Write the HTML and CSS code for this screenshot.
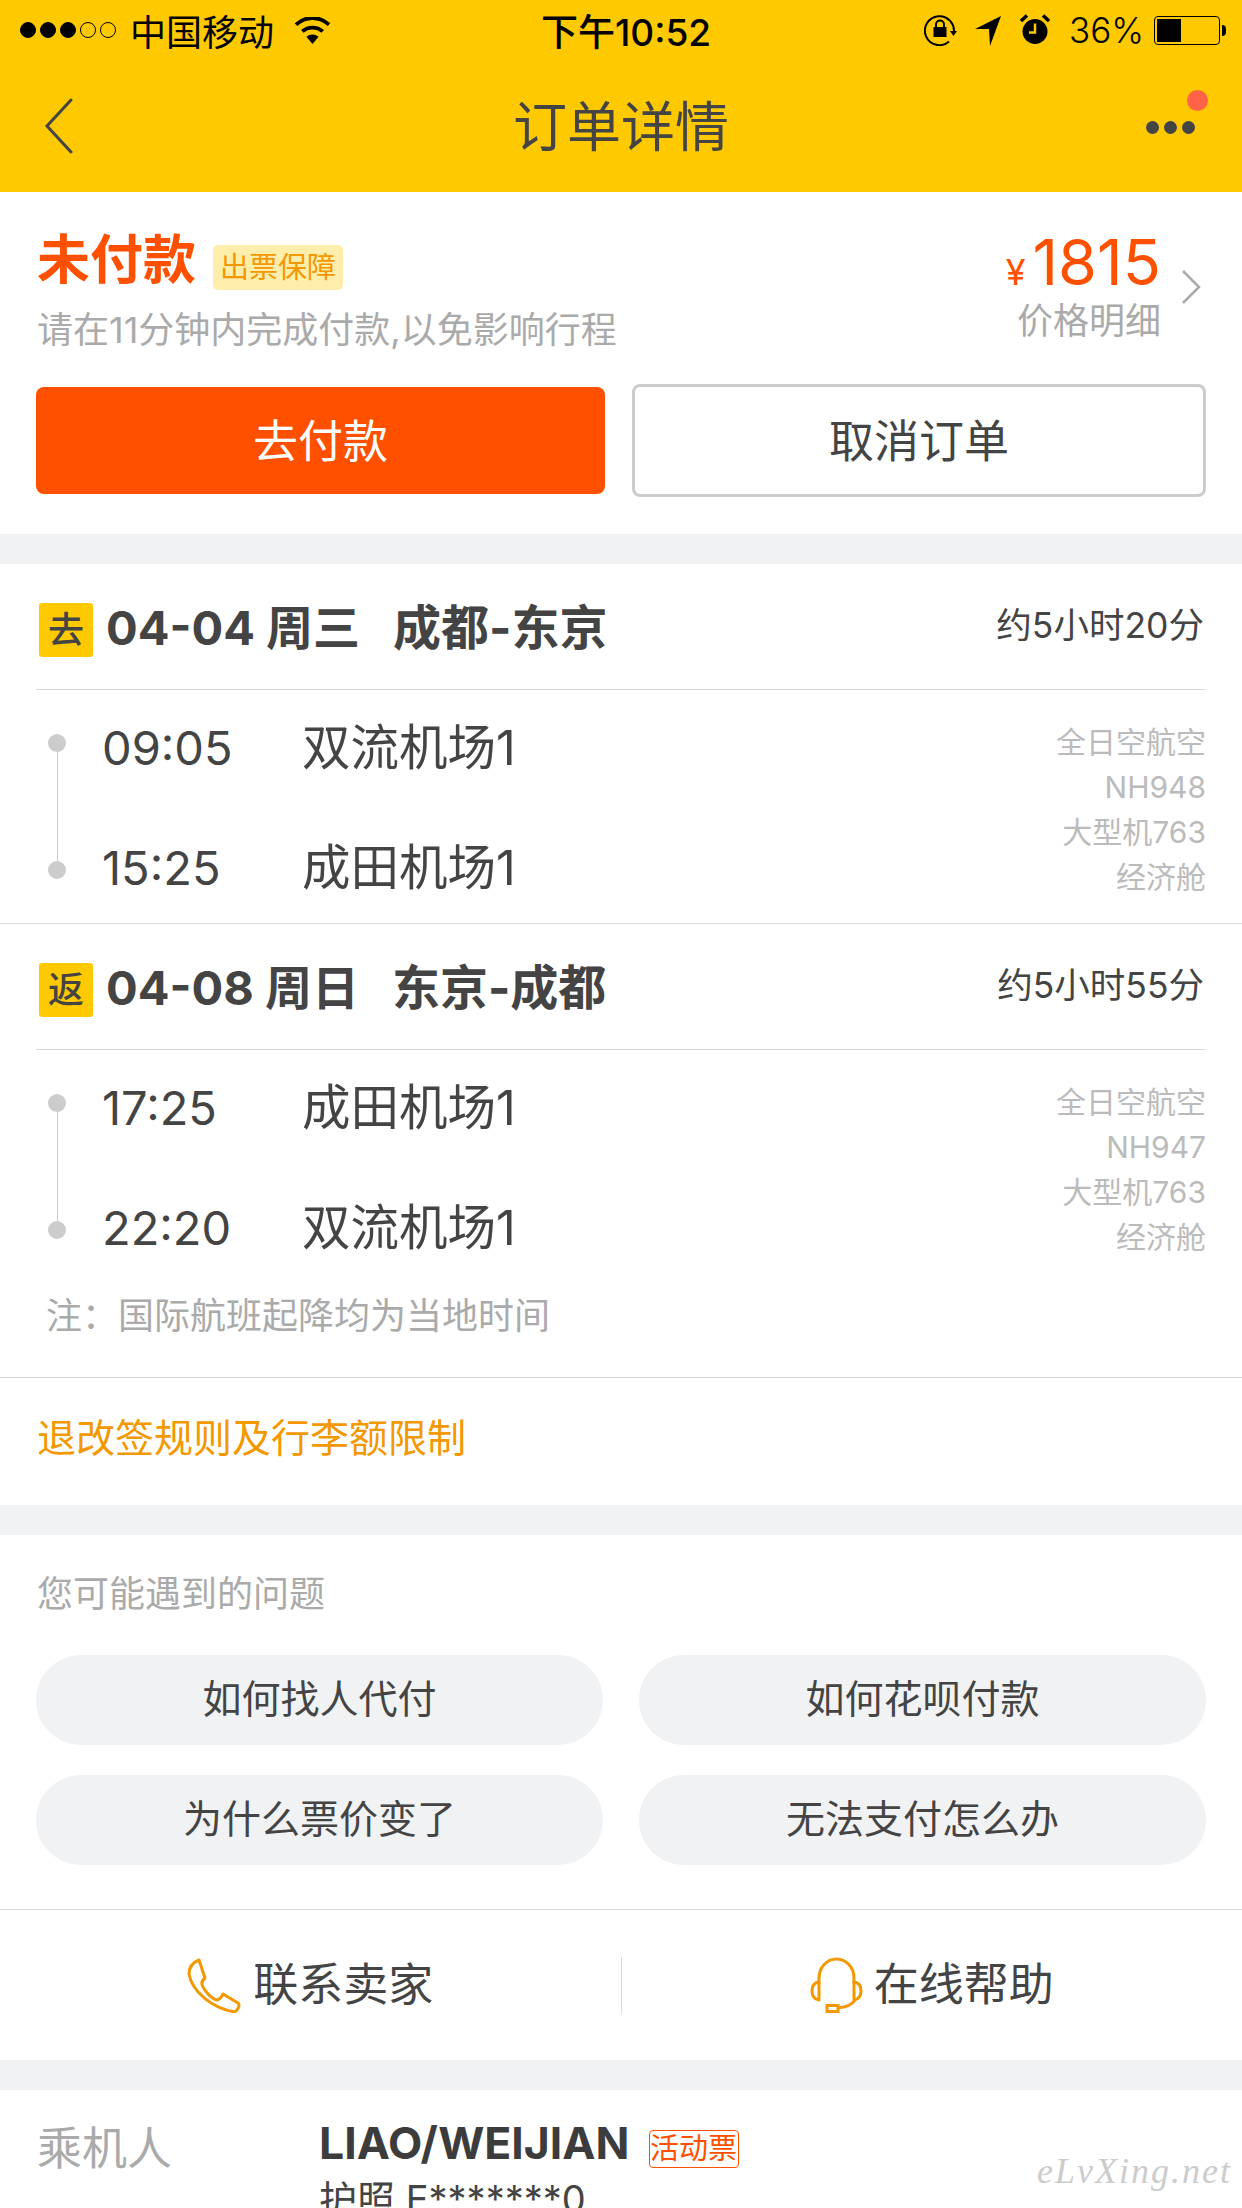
FILE: index.html
```html
<!DOCTYPE html>
<html lang="zh-CN">
<head>
    <meta charset="UTF-8">
    <meta name="viewport" content="width=device-width, initial-scale=1.0">
    <title>订单详情</title>
    <link rel="stylesheet" href="styles.css">
</head>
<body>

    <div class="top-bar">
        <div class="status-bar">
            <div class="status-left">
                <span class="signal"><i class="on"></i><i class="on"></i><i class="on"></i><i></i><i></i></span>
                <span class="carrier">中国移动</span>
                <svg class="wifi" width="37" height="27" viewBox="0 0 37 27">
                    <path d="M18.5 27 L12.4 19.8 A9.5 9.5 0 0 1 24.6 19.8 Z" fill="#000"/>
                    <path d="M8.3 14.4 A15.5 15.5 0 0 1 28.7 14.4" fill="none" stroke="#000" stroke-width="3.8"/>
                    <path d="M2 7.6 A24 24 0 0 1 35 7.6" fill="none" stroke="#000" stroke-width="3.8"/>
                </svg>
            </div>
            <div class="status-time">下午10:52</div>
            <div class="status-right">
                <svg class="rotate-lock" width="33" height="33" viewBox="0 0 33 33">
                    <path d="M29.5 21 A14.5 14.5 0 1 0 25 28.5" fill="none" stroke="#000" stroke-width="2"/>
                    <path d="M26 18 L33 18 L29.5 23 Z" fill="#000"/>
                    <rect x="9.5" y="14" width="13" height="10" fill="#000"/>
                    <path d="M12 14 V11.5 A4 4 0 0 1 20 11.5 V14" fill="none" stroke="#000" stroke-width="2"/>
                </svg>
                <svg class="arrow" width="26" height="32" viewBox="0 0 26 32">
                    <path d="M26 2 L15 32 L14 15 L0 15 Z" fill="#000"/>
                </svg>
                <svg class="alarm" width="30" height="32" viewBox="0 0 30 32">
                    <circle cx="15" cy="17.5" r="12.5" fill="#000"/>
                    <path d="M1 7 L7 1.5 M29 7 L23 1.5" stroke="#000" stroke-width="3.5"/>
                    <path d="M15 9.5 V18.5 H9" fill="none" stroke="#ffc900" stroke-width="2.5"/>
                </svg>
                <span class="battery-pct">36%</span>
                <span class="battery"><span class="battery-fill"></span></span>
                <span class="battery-nub"></span>
            </div>
        </div>
        <div class="nav-bar">
            <svg class="back" width="30" height="56" viewBox="0 0 30 56">
                <path d="M27 2 L3 28 L27 54" fill="none" stroke="#444" stroke-width="3" stroke-linecap="round" stroke-linejoin="miter"/>
            </svg>
            <h1 class="page-title">订单详情</h1>
            <div class="more">
                <i></i><i></i><i></i>
                <span class="red-dot"></span>
            </div>
        </div>
    </div>

    <div class="section order-top">
        <div class="summary">
            <div>
                <div class="status-row">
                    <span class="status-text">未付款</span>
                    <span class="guarantee">出票保障</span>
                </div>
                <div class="status-tip">请在11分钟内完成付款,以免影响行程</div>
            </div>
            <div class="price-box">
                <div class="price-col">
                    <div class="price"><span class="yen">¥</span>1815</div>
                    <div class="price-detail">价格明细</div>
                </div>
                <svg class="price-arrow" width="26" height="38" viewBox="0 0 26 38">
                    <path d="M3 3 L19 19 L3 35" fill="none" stroke="#aaa" stroke-width="2.5"/>
                </svg>
            </div>
        </div>
        <div class="actions">
            <div class="btn btn-pay">去付款</div>
            <div class="btn btn-cancel">取消订单</div>
        </div>
    </div>

    <div class="section">
        <div class="leg">
            <div class="leg-head">
                <span class="leg-tag">去</span>
                <span class="leg-title">04-04 周三<span class="leg-route">成都-东京</span></span>
                <span class="leg-duration">约5小时20分</span>
            </div>
            <div class="leg-body">
                <div class="timeline"><i class="dot"></i><i class="line"></i><i class="dot"></i></div>
                <div class="stops">
                    <div class="stop"><span class="stop-time">09:05</span><span class="stop-name">双流机场1</span></div>
                    <div class="stop"><span class="stop-time">15:25</span><span class="stop-name">成田机场1</span></div>
                </div>
                <div class="flight-info">全日空航空<br>NH948<br>大型机763<br>经济舱</div>
            </div>
        </div>
        <div class="leg leg-last">
            <div class="leg-head">
                <span class="leg-tag">返</span>
                <span class="leg-title">04-08 周日<span class="leg-route">东京-成都</span></span>
                <span class="leg-duration">约5小时55分</span>
            </div>
            <div class="leg-body">
                <div class="timeline"><i class="dot"></i><i class="line"></i><i class="dot"></i></div>
                <div class="stops">
                    <div class="stop"><span class="stop-time">17:25</span><span class="stop-name">成田机场1</span></div>
                    <div class="stop"><span class="stop-time">22:20</span><span class="stop-name">双流机场1</span></div>
                </div>
                <div class="flight-info">全日空航空<br>NH947<br>大型机763<br>经济舱</div>
            </div>
            <div class="note">注：国际航班起降均为当地时间</div>
        </div>
        <div class="rule-link">退改签规则及行李额限制</div>
    </div>

    <div class="section">
        <div class="faq">
            <div class="faq-title">您可能遇到的问题</div>
            <div class="faq-list">
                <div class="pill">如何找人代付</div>
                <div class="pill">如何花呗付款</div>
                <div class="pill">为什么票价变了</div>
                <div class="pill">无法支付怎么办</div>
            </div>
        </div>
        <div class="contact">
            <div class="contact-item">
                <svg width="55" height="55" viewBox="0 0 55 55">
                    <path d="M12 2 L18 20 Q13 24 16 29 Q21 38 29 42 Q33 42 36 36 L51 45 Q54 48 48 54 C24 50 5 33 2 16 Q2 6 12 2 Z" fill="none" stroke="#f39800" stroke-width="3" stroke-linejoin="round"/>
                </svg>
                <span class="contact-text">联系卖家</span>
            </div>
            <div class="contact-sep"></div>
            <div class="contact-item">
                <svg width="53" height="56" viewBox="0 0 53 56">
                    <path d="M9 27 V21 A17.5 19 0 0 1 44 21 V27" fill="none" stroke="#f39800" stroke-width="3"/>
                    <path d="M9 25 V43 Q2 42 2 34 Q2 26 9 25 Z M44 25 V43 Q51 42 51 34 Q51 26 44 25 Z" fill="none" stroke="#f39800" stroke-width="3" stroke-linejoin="round"/>
                    <path d="M45 43 Q41 50 27 51" fill="none" stroke="#f39800" stroke-width="3"/>
                    <rect x="17" y="48.5" width="11" height="6" fill="none" stroke="#f39800" stroke-width="3"/>
                </svg>
                <span class="contact-text">在线帮助</span>
            </div>
        </div>
    </div>

    <div class="section passenger">
        <div class="passenger-label">乘机人</div>
        <div>
            <div class="passenger-name">
                <span>LIAO/WEIJIAN</span>
                <span class="promo-tag">活动票</span>
            </div>
            <div class="passport">护照 E*******0</div>
        </div>
        <div class="watermark">eLvXing.net</div>
    </div>

</body>
</html>
```

FILE: styles.css
```css
html, body {
    height: 2208px;
    overflow: hidden;
}
body {
    font-family: Inter, "Noto Sans CJK SC", sans-serif;
    background-color: #f1f2f4;
    color: #444;
    margin: 0;
    padding: 0;
}
i {
    display: block;
}

/* top bar */
.top-bar {
    background-color: #ffc900;
    height: 192px;
}
.status-bar {
    height: 60px;
    display: flex;
    align-items: center;
    justify-content: space-between;
    padding: 0 16px 0 20px;
    color: #000;
    font-size: 36px;
    position: relative;
}
.status-left, .status-right {
    display: flex;
    align-items: center;
}
.signal {
    display: flex;
    gap: 4px;
}
.signal i {
    width: 14px;
    height: 14px;
    border: 1px solid #000;
    border-radius: 50%;
}
.signal i.on {
    background-color: #000;
}
.carrier {
    margin-left: 14px;
    font-size: 36px;
}
.wifi {
    margin-left: 20px;
}
.status-time {
    position: absolute;
    left: 541px;
    font-weight: 500;
    font-size: 37px;
}
.rotate-lock {
    margin-bottom: 2px;
}
.arrow {
    margin-left: 18px;
}
.alarm {
    margin-left: 19px;
}
.battery-pct {
    margin-left: 19px;
    font-size: 35px;
    font-weight: 300;
}
.battery {
    margin-left: 10px;
    width: 66px;
    height: 29px;
    box-sizing: border-box;
    border: 1px solid #000;
    border-radius: 4px;
    padding: 2px;
    display: block;
}
.battery-fill {
    display: block;
    width: 24px;
    height: 100%;
    background-color: #000;
}
.battery-nub {
    width: 4px;
    height: 11px;
    background-color: #000;
    border-radius: 0 4px 4px 0;
    margin-left: 2px;
}
.nav-bar {
    height: 132px;
    box-sizing: border-box;
    padding: 3px 47px 0 44px;
    display: flex;
    align-items: center;
    justify-content: space-between;
}
.back {
    margin-top: -3px;
}
.page-title {
    margin: 0 0 0 22px;
    font-size: 54px;
    font-weight: 400;
    line-height: 60px;
    color: #444;
}
.more {
    display: flex;
    gap: 5px;
    width: 49px;
    position: relative;
}
.more i {
    width: 13px;
    height: 13px;
    background-color: #444;
    border-radius: 50%;
}
.red-dot {
    position: absolute;
    left: 41px;
    top: -31px;
    width: 21px;
    height: 21px;
    border-radius: 50%;
    background-color: #ff6347;
}

/* sections */
.section {
    background: white;
    margin-bottom: 30px;
}
.order-top {
    height: 342px;
    box-sizing: border-box;
    padding: 40px 36px 0;
}
.summary {
    display: flex;
    justify-content: space-between;
}
.status-row {
    display: flex;
    align-items: center;
    height: 56px;
}
.status-text {
    color: #ff5000;
    font-size: 53px;
    font-weight: 700;
    line-height: 56px;
    margin-left: 1px;
}
.guarantee {
    margin-left: 17px;
    margin-top: 15px;
    padding: 0 7px;
    height: 45px;
    line-height: 45px;
    font-size: 29px;
    color: #f39800;
    background-color: #ffeeab;
    border-radius: 5px;
}
.status-tip {
    margin-top: 20px;
    font-size: 36px;
    line-height: 44px;
    color: #aaa;
    margin-left: 1px;
}
.price-box {
    display: flex;
    align-items: flex-start;
}
.price-col {
    text-align: right;
}
.price {
    color: #ff5000;
    font-size: 63px;
    line-height: 60px;
}
.yen {
    font-size: 36px;
    margin-right: 7px;
}
.price-detail {
    margin-top: -3px;
    font-size: 36px;
    line-height: 44px;
    color: #aaa;
}
.price-arrow {
    margin: 36px 0 0 19px;
}
.actions {
    display: flex;
    align-items: center;
    gap: 27px;
    margin-top: 32px;
}
.btn {
    display: flex;
    align-items: center;
    justify-content: center;
    box-sizing: border-box;
    padding-bottom: 5px;
    font-size: 45px;
    border-radius: 8px;
}
.btn-pay {
    width: 569px;
    height: 107px;
    background-color: #ff5000;
    color: white;
}
.btn-cancel {
    flex: 1;
    height: 113px;
    border: 3px solid #ccc;
    color: #444;
}

/* flight legs */
.leg {
    border-bottom: 1px solid #d8d8d8;
    height: 360px;
    box-sizing: border-box;
}
.leg-last {
    height: 454px;
}
.leg-head {
    height: 126px;
    box-sizing: border-box;
    margin: 0 36px;
    padding: 39px 2px 0 3px;
    border-bottom: 1px solid #d8d8d8;
    display: flex;
    align-items: flex-start;
}
.leg-tag {
    width: 54px;
    height: 54px;
    line-height: 54px;
    text-align: center;
    font-size: 36px;
    font-weight: 500;
    background-color: #ffc900;
    border-radius: 3px;
    flex: none;
}
.leg-title {
    margin-left: 13px;
    font-size: 47px;
    font-weight: 700;
    line-height: 50px;
    flex: 1;
}
.leg-route {
    margin-left: 33px;
    font-size: 48px;
}
.leg-duration {
    font-size: 35.5px;
    line-height: 46px;
}
.leg-body {
    display: flex;
    padding: 30px 36px 0 48px;
}
.timeline {
    width: 18px;
    margin-top: 14px;
    height: 145px;
    display: flex;
    flex-direction: column;
    align-items: center;
}
.dot {
    width: 18px;
    height: 18px;
    flex: none;
    background-color: #ccc;
    border-radius: 50%;
}
.line {
    width: 1px;
    flex: 1;
    background-color: #ccc;
}
.stops {
    margin: -2px 0 0 36px;
    flex: 1;
    display: flex;
    flex-direction: column;
    gap: 60px;
}
.stop {
    display: flex;
    height: 60px;
    line-height: 60px;
}
.stop-time {
    width: 200px;
    font-size: 47px;
}
.stop-name {
    font-size: 48.5px;
}
.flight-info {
    text-align: right;
    font-size: 30px;
    line-height: 45px;
    color: #bbb;
}
.note {
    margin: 31px 0 0 46px;
    font-size: 36px;
    line-height: 50px;
    color: #aaa;
}
.rule-link {
    height: 127px;
    box-sizing: border-box;
    padding: 0 37px 14px;
    display: flex;
    align-items: center;
    font-size: 39px;
    color: #f39800;
}

/* questions */
.faq {
    padding: 37px 36px 44px;
    border-bottom: 1px solid #d8d8d8;
}
.faq-title {
    font-size: 36px;
    line-height: 44px;
    color: #aaa;
    margin-left: 1px;
}
.faq-list {
    margin-top: 39px;
    display: grid;
    grid-template-columns: 1fr 1fr;
    gap: 30px 36px;
}
.pill {
    height: 90px;
    line-height: 88px;
    text-align: center;
    font-size: 39px;
    background-color: #f1f2f4;
    border-radius: 45px;
}
.contact {
    height: 150px;
    display: flex;
    align-items: center;
}
.contact-item {
    flex: 1;
    display: flex;
    align-items: center;
    justify-content: center;
    gap: 11px;
    font-size: 45px;
}
.contact-text {
    padding-bottom: 8px;
}
.contact-sep {
    width: 1px;
    height: 57px;
    background-color: #d8d8d8;
}

/* passenger */
.passenger {
    display: flex;
    padding: 23px 0 0 37px;
    position: relative;
    margin-bottom: 0;
}
.passenger-label {
    width: 282px;
    margin-top: 6px;
    font-size: 45px;
    line-height: 60px;
    color: #aaa;
}
.passenger-name {
    display: flex;
    align-items: center;
    height: 60px;
    font-size: 44.5px;
    font-weight: 700;
    color: #3c3c3c;
}
.promo-tag {
    margin-left: 19px;
    margin-top: 12px;
    width: 90px;
    height: 38px;
    box-sizing: border-box;
    border: 1px solid #ff5000;
    border-radius: 4px;
    color: #ff5000;
    font-size: 29px;
    font-weight: 400;
    line-height: 36px;
    text-align: center;
}
.passport {
    margin-top: 1px;
    font-size: 38px;
    line-height: 50px;
}
.watermark {
    position: absolute;
    left: 1037px;
    top: 60px;
    font-family: "Liberation Serif", serif;
    font-style: italic;
    font-size: 36px;
    letter-spacing: 2px;
    color: #ccc;
}
```
